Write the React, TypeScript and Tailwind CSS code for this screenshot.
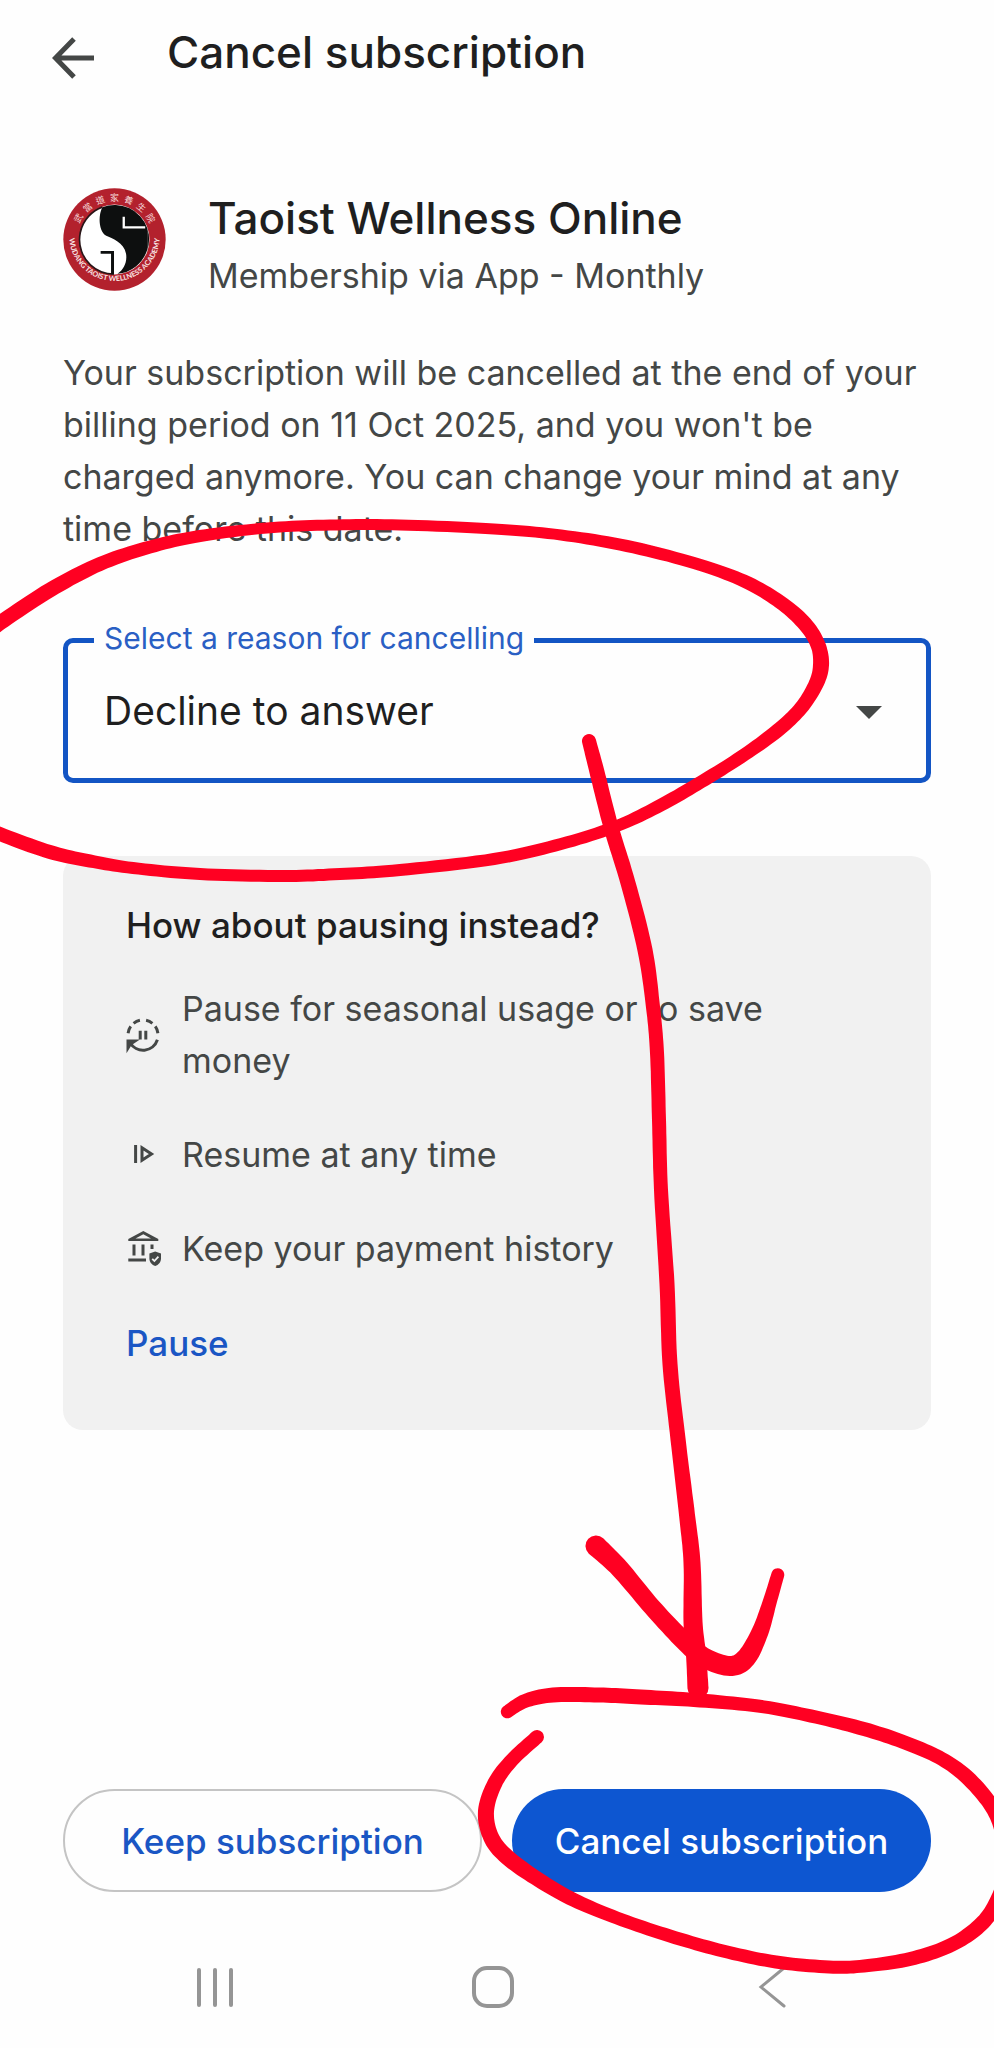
import { useState } from "react";
import type { ReactNode } from "react";

type BrushPoint = [x: number, y: number, width: number];

// Turns centre points with a width at each into the outline of a smooth marker stroke.
function brush(points: BrushPoint[]): string {
  const samples: BrushPoint[] = [];
  const steps = 10;
  for (let i = 0; i < points.length - 1; i++) {
    const a = points[Math.max(i - 1, 0)];
    const b = points[i];
    const c = points[i + 1];
    const d = points[Math.min(i + 2, points.length - 1)];
    for (let s = 0; s < steps; s++) {
      const t = s / steps;
      const at = (k: 0 | 1 | 2) =>
        0.5 *
        (2 * b[k] +
          (c[k] - a[k]) * t +
          (2 * a[k] - 5 * b[k] + 4 * c[k] - d[k]) * t * t +
          (3 * b[k] - a[k] - 3 * c[k] + d[k]) * t * t * t);
      samples.push([at(0), at(1), at(2)]);
    }
  }
  samples.push(points[points.length - 1]);

  const left: string[] = [];
  const right: string[] = [];
  samples.forEach(([x, y, w], i) => {
    const p = samples[Math.max(i - 1, 0)];
    const n = samples[Math.min(i + 1, samples.length - 1)];
    const dx = n[0] - p[0];
    const dy = n[1] - p[1];
    const len = Math.hypot(dx, dy) || 1;
    const ox = ((-dy / len) * w) / 2;
    const oy = ((dx / len) * w) / 2;
    left.push(`${(x + ox).toFixed(1)} ${(y + oy).toFixed(1)}`);
    right.unshift(`${(x - ox).toFixed(1)} ${(y - oy).toFixed(1)}`);
  });
  const endR = points[points.length - 1][2] / 2;
  const startR = points[0][2] / 2;
  return `M${left.join("L")}A${endR} ${endR} 0 0 0 ${right[0]}L${right.slice(1).join("L")}A${startR} ${startR} 0 0 0 ${left[0]}Z`;
}

const marks: BrushPoint[][] = [
  [
    [-30, 646, 15], [0, 623, 15], [50, 590, 15], [100, 564, 14], [150, 547, 13], [200, 536, 12], [267, 528, 11],
    [330, 525, 11], [400, 525, 11], [494, 529, 11], [561, 535, 11], [627, 546, 12], [694, 563, 12],
    [744, 581, 13], [780, 602, 14], [805, 624, 15], [818, 645, 15], [821, 665, 16], [816, 684, 15],
    [801, 708, 14], [777, 731, 14], [741, 757, 13], [701, 782, 13], [661, 805, 13], [617, 826, 12],
    [561, 844, 12], [494, 859, 12], [400, 870, 12], [340, 874, 12], [283, 876, 12], [200, 874, 12],
    [133, 868, 12], [90, 861, 13], [50, 852, 14], [0, 834, 14], [-30, 820, 14],
  ],
  [
    [589, 741, 14], [597, 772, 15], [611, 827, 15], [628, 883, 15], [645, 950, 15],
    [653, 1007, 14], [657, 1053, 14], [659, 1120, 14], [661, 1190, 14], [667, 1284, 15], [670, 1364, 15],
    [678, 1439, 15], [687, 1515, 16], [692, 1563, 17], [693, 1622, 19], [696, 1654, 20], [698, 1688, 21],
  ],
  [
    [596, 1546, 21], [620, 1569, 19], [652, 1607, 18], [684, 1641, 19], [705, 1658, 20], [730, 1666, 20],
    [746, 1658, 20], [760, 1632, 17], [770, 1601, 14], [778, 1574, 13],
  ],
  [
    [507, 1712, 13], [525, 1701, 14], [553, 1695, 15], [599, 1695, 15], [641, 1697, 15], [694, 1700, 14],
    [758, 1706, 13], [811, 1716, 13], [864, 1729, 14], [906, 1743, 14], [942, 1759, 14], [970, 1780, 15],
    [994, 1810, 15], [1004, 1840, 15], [1006, 1875, 15], [994, 1907, 15], [977, 1928, 15], [949, 1946, 14],
    [910, 1959, 14], [864, 1966, 13], [829, 1967, 13], [776, 1962, 13], [723, 1951, 13], [670, 1936, 13],
    [617, 1918, 13], [574, 1900, 14], [539, 1880, 15], [507, 1857, 16], [491, 1837, 16], [486, 1811, 16],
    [495, 1783, 15], [512, 1760, 14], [537, 1737, 14],
  ],
];

function MarkerOverlay() {
  return (
    <svg
      className="pointer-events-none absolute inset-0 h-full w-full"
      viewBox="0 0 994 2048"
      preserveAspectRatio="none"
      fill="#ff0022"
      aria-hidden="true"
    >
      {marks.map((points, i) => (
        <path key={i} d={brush(points)} />
      ))}
    </svg>
  );
}

function Logo() {
  return (
    <svg className="size-[103px] shrink-0" viewBox="38 37 312 312" aria-hidden="true">
      <defs>
        <path id="ring-top" d="M77 193a117 117 0 0 1 234 0" />
        <path id="ring-bottom" d="M57 182A137 137 0 1 0 331 182" />
      </defs>
      <circle cx="194" cy="193" r="155" fill="#b3212d" />
      <circle cx="194" cy="193" r="106" fill="#fff" />
      <path
        d="M157 95A105 105 0 0 1 293 158V225A105 105 0 0 1 203 297C222 283 233 262 229 236C223 202 186 190 169 182C147 170 143 124 157 95Z"
        fill="#0d0f0f"
      />
      <path d="M293 158A105 105 0 0 1 293 226Z" fill="#0d0f0f" />
      <path d="M157 95A105 105 0 0 0 121 270A105 105 0 0 0 192 298" fill="none" stroke="#2a1618" strokeWidth="5" />
      <path d="M222 124V156H287" fill="none" stroke="#fff" strokeWidth="7" />
      <path d="M152 232H188V298" fill="none" stroke="#0d0f0f" strokeWidth="9" />
      <text fill="#f5d9d9" fontSize="27" fontFamily="'Noto Sans CJK TC', sans-serif" textAnchor="middle">
        <textPath href="#ring-top" startOffset="50%">{"武\u2002當\u2002道\u2002家\u2002養\u2002生\u2002院"}</textPath>
      </text>
      <text fill="#f8e4e4" fontSize="22" fontWeight="700" fontFamily="Lato, sans-serif" textAnchor="middle">
        <textPath href="#ring-bottom" startOffset="50%">WUDANG TAOIST WELLNESS ACADEMY</textPath>
      </text>
    </svg>
  );
}

function PauseCycleIcon() {
  return (
    <svg className="size-[34px] shrink-0 overflow-visible" viewBox="0 0 34 34" fill="none" stroke="#444746" strokeWidth="3" aria-hidden="true">
      <path d="M2.1 15.2A15 15 0 0 1 4.7 8.4M7.6 5.3A15 15 0 0 1 13.9 2.3M20.1 2.3A15 15 0 0 1 26.4 5.3M29.3 8.4A15 15 0 0 1 31.9 15.2" />
      <path d="M31.4 21.8A15 15 0 0 1 4 24.5" />
      <path d="M9 23H2V30L4.500 26Z" fill="#444746" />
      <path d="M14.200 12.800V21.600M19.800 12.800V21.600" />
    </svg>
  );
}

function ResumeIcon() {
  return (
    <svg className="size-[34px] shrink-0" viewBox="0 0 34 34" fill="none" stroke="#444746" strokeWidth="3" aria-hidden="true">
      <path d="M9.600 7V25M16 9.800L25.500 16L16 22.200Z" />
    </svg>
  );
}

function BankShieldIcon() {
  return (
    <svg className="size-[34px] shrink-0 overflow-visible" viewBox="0 0 34 34" fill="none" stroke="#444746" strokeWidth="3" aria-hidden="true">
      <path d="M2.300 9V7L17.300 -1L32.300 7V9Z" fill="#444746" stroke="none" />
      <path d="M9.500 6.400L17.300 2.200L25 6.400Z" fill="#f1f1f1" stroke="none" />
      <path d="M8 12.600V23.400M17 12.600V23.400M26 12.600V17M2.300 28H20" />
      <path d="M29.200 19.400L35 21.600V26.500C35 30 32.500 33 29.200 34C25.900 33 23.400 30 23.400 26.500V21.600Z" fill="#444746" stroke="none" />
      <path d="M26.200 26.800L28.400 29L32.400 24.600" stroke="#f1f1f1" strokeWidth="1.800" />
    </svg>
  );
}

function Perk({ icon, children }: { icon: ReactNode; children: ReactNode }) {
  return (
    <li className="flex items-center gap-[22px]">
      {icon}
      <span>{children}</span>
    </li>
  );
}

export default function App() {
  const [reason, setReason] = useState("Decline to answer");

  return (
    <div className="relative flex min-h-screen flex-col overflow-hidden bg-[#fefefe] font-['Inter',sans-serif] text-[34px] leading-[52px] text-[#444746]">
      <header className="flex items-end gap-[73px] pt-6 pr-4 pl-[52px]">
        <button type="button" aria-label="Back" className="flex h-11 items-center">
          <svg className="size-[42px]" viewBox="0 0 42 42" fill="none" stroke="#444746" strokeWidth="5" aria-hidden="true">
            <path d="M42 21H4M22 2L3.500 21L22 40" />
          </svg>
        </button>
        <h1 className="text-[44px] leading-[56px] font-medium text-[#1f1f1f]">Cancel subscription</h1>
      </header>

      <main className="flex grow flex-col px-[63px] pt-[108px]">
        <section className="flex gap-[42px]">
          <Logo />
          <div>
            <h2 className="text-[44px] leading-[60px] font-medium text-[#1f1f1f]">Taoist Wellness Online</h2>
            <p className="leading-[56px]">Membership via App - Monthly</p>
          </div>
        </section>

        <p className="mt-[43px]">
          Your subscription will be cancelled at the end of your billing period on 11 Oct 2025, and you won't be charged
          anymore. You can change your mind at any time before this date.
        </p>

        <fieldset className="relative mt-[67px] rounded-[10px] border-[5px] border-[#1355c4]">
          <legend className="ml-[26px] px-[10px] pb-1 text-[30px] leading-8 text-[#2a5fc4]">
            <label htmlFor="reason">Select a reason for cancelling</label>
          </legend>
          <select
            id="reason"
            value={reason}
            onChange={(e) => setReason(e.target.value)}
            className="mb-[14px] block h-[106px] w-full appearance-none bg-transparent pl-9 text-[39px] text-[#1f1f1f] outline-none"
          >
            <option>Decline to answer</option>
          </select>
          <svg className="pointer-events-none absolute right-11 bottom-[59px] h-[13px] w-[26px]" viewBox="0 0 26 13" fill="#444746" aria-hidden="true">
            <path d="M0 0H26L13 13Z" />
          </svg>
        </fieldset>

        <section className="mt-[73px] rounded-[20px] bg-[#f1f1f1] pt-[43px] pr-20 pb-[61px] pl-[63px]">
          <h3 className="text-[35px] font-medium text-[#1f1f1f]">How about pausing instead?</h3>
          <ul className="mt-8 flex flex-col gap-[42px]">
            <Perk icon={<PauseCycleIcon />}>Pause for seasonal usage or to save money</Perk>
            <Perk icon={<ResumeIcon />}>Resume at any time</Perk>
            <Perk icon={<BankShieldIcon />}>Keep your payment history</Perk>
          </ul>
          <button type="button" className="mt-[42px] block text-[35px] font-medium text-[#1a56c4]">
            Pause
          </button>
        </section>

        <div className="mt-auto grid grid-cols-2 gap-[30px] pt-10 text-[35px] font-medium">
          <button type="button" className="h-[103px] rounded-full border-2 border-[#c4c4c4] text-[#1a56c4]">
            Keep subscription
          </button>
          <button type="button" className="h-[103px] rounded-full bg-[#0d56d1] text-white">
            Cancel subscription
          </button>
        </div>
      </main>

      <nav className="grid grid-cols-3 justify-items-center pt-[74px] pr-[83px] pb-10 pl-[76px]" aria-label="System">
        <button type="button" aria-label="Recent apps">
          <svg className="size-[42px]" viewBox="0 0 42 42" stroke="#959595" strokeWidth="4" strokeLinecap="round" aria-hidden="true">
            <path d="M5 4V39M21 4V39M37 4V39" />
          </svg>
        </button>
        <button type="button" aria-label="Home">
          <svg className="size-[42px]" viewBox="0 0 42 42" fill="none" stroke="#959595" strokeWidth="4" aria-hidden="true">
            <rect x="2" y="2" width="38" height="38" rx="13" />
          </svg>
        </button>
        <button type="button" aria-label="Go back">
          <svg className="size-[42px]" viewBox="0 0 42 42" fill="none" stroke="#959595" strokeWidth="3" strokeLinecap="round" aria-hidden="true">
            <path d="M33 2L10 21L33 40" />
          </svg>
        </button>
      </nav>

      <MarkerOverlay />
    </div>
  );
}
